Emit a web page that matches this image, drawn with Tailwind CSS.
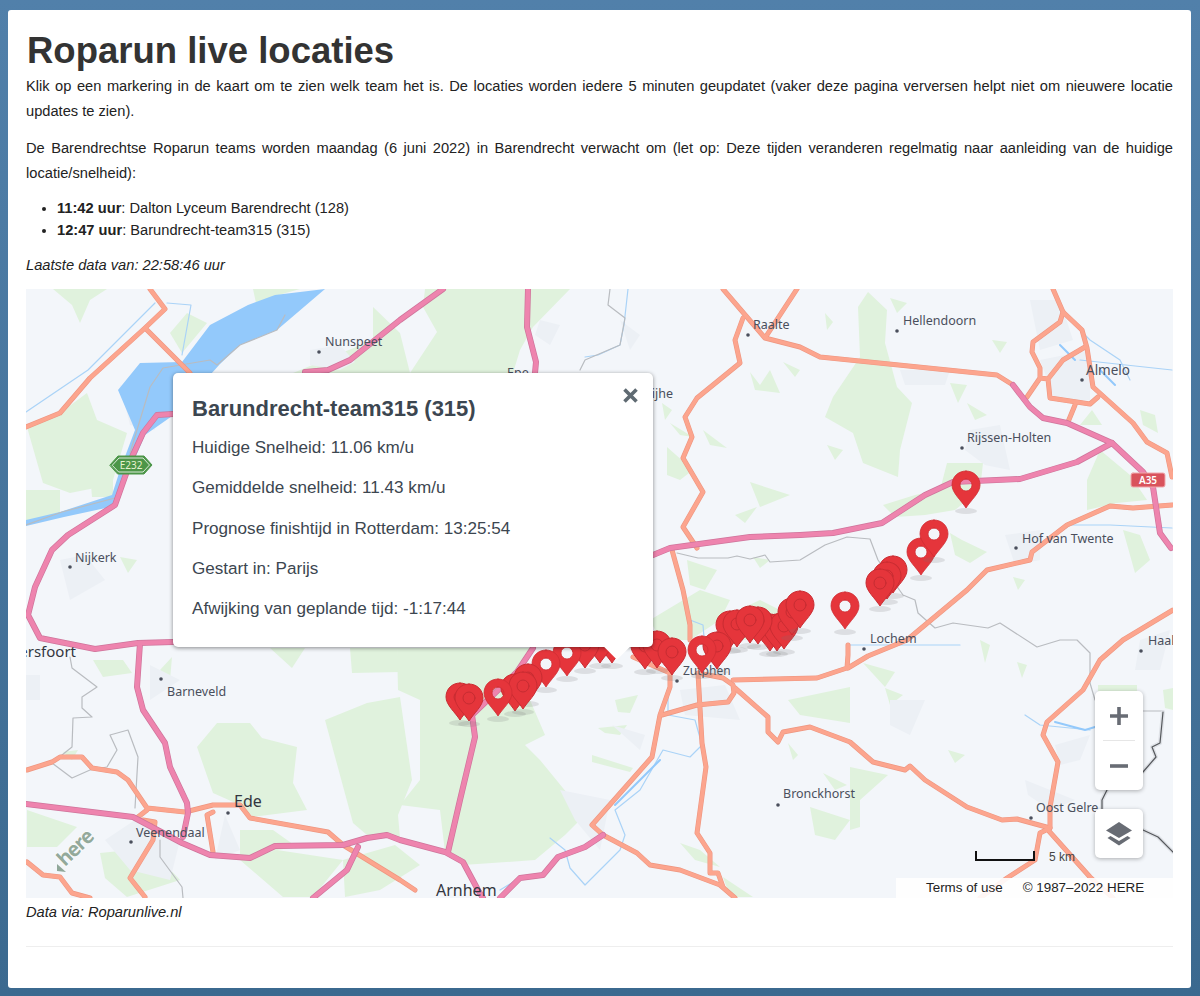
<!DOCTYPE html>
<html lang="en">
<head>
  <meta charset="UTF-8">
  <title>Roparun live locaties</title>
  <script src="https://cdn.jsdelivr.net/npm/@tailwindcss/browser@4"></script>
</head>
<body class="h-[996px] overflow-hidden bg-gradient-to-b from-[#5180aa] to-[#3b698f] font-['Liberation_Sans',Arial,sans-serif]">
  <!-- Page card -->
  <main class="ml-[8px] mt-[10px] h-[978px] w-[1183px] rounded-[3px] bg-white pl-[18px] pr-[18px] pt-[21px] text-[14.67px] leading-[25px] text-[#222]">
    <h1 class="mb-[3px] pl-[1px] text-[36.5px] font-bold leading-[40px] text-[#333]">Roparun live locaties</h1>
    <p class="mb-[12px] text-justify">Klik op een markering in de kaart om te zien welk team het is. De locaties worden iedere 5 minuten geupdatet (vaker deze pagina verversen helpt niet om nieuwere locatie updates te zien).</p>
    <p class="mb-[11px] text-justify">De Barendrechtse Roparun teams worden maandag (6 juni 2022) in Barendrecht verwacht om (let op: Deze tijden veranderen regelmatig naar aanleiding van de huidige locatie/snelheid):</p>
    <ul class="mb-[12px] list-disc pl-[31px] leading-[22px]">
      <li><b>11:42 uur</b>: Dalton Lyceum Barendrecht (128)</li>
      <li><b>12:47 uur</b>: Barundrecht-team315 (315)</li>
    </ul>
    <p class="mb-[11px] italic">Laatste data van: 22:58:46 uur</p>

    <!-- Map -->
    <div class="relative h-[609px] w-[1147px] overflow-hidden bg-[#f3f6fa]">
      <svg class="block" width="1147" height="609" viewBox="26 289 1147 609" fill="none" stroke-linejoin="round" stroke-linecap="round">
        <defs>
          <path id="pinshape" d="M0 -14C8 -14 14 -8 14 0C14 8 5 15 0 23C-5 15 -14 8 -14 0C-14 -8 -8 -14 0 -14Z"/>
          <!-- pin with a see-through hole -->
          <g id="pin">
            <ellipse cx="0" cy="26" rx="11" ry="3" fill="#777" opacity=".18"/>
            <path fill-rule="evenodd" fill="#e5353b" stroke="#cf2d33" stroke-width=".8" d="M0 -14C8 -14 14 -8 14 0C14 8 5 15 0 23C-5 15 -14 8 -14 0C-14 -8 -8 -14 0 -14ZM0 -6A6 6 0 1 0 0 6A6 6 0 1 0 0 -6Z"/>
          </g>
          <!-- pin sitting on another pin: hole shows red -->
          <g id="pinf">
            <ellipse cx="0" cy="26" rx="11" ry="3" fill="#777" opacity=".18"/>
            <use href="#pinshape" fill="#e5353b" stroke="#c92c32" stroke-width="1"/>
            <circle cx="0" cy="0" r="6" stroke="#c62c32" stroke-width="1"/>
          </g>
          <g id="orange">
            <path d="M26 427L60 413L90 378L145 328L165 309L150 289M145 328L190 373"/>
            <path d="M723 289L765 338L800 347L820 357L997 375L1013 385M765 338L797 289"/>
            <path d="M743 318L735 340L740 363L697 398L685 417L692 437L683 458L703 492L683 527L697 548"/>
            <path d="M672 550L683 590L690 625L690 640"/>
            <path d="M592 825L652 757L660 715L670 687L670 673L633 657M592 825L603 835L637 853L650 865L680 870L720 885L735 898"/>
            <path d="M662 715L697 705L728 702L734 693L733 685L723 678L698 673L702 743L706 767L697 833L710 853L710 873L718 873L723 887"/>
            <path d="M733 680L817 678L847 668L848 655L848 645M735 688L768 717L768 732L778 742L783 732L810 727L850 742L873 762L905 770L910 766L925 780L967 807L1002 820L1017 819L1050 828"/>
            <path d="M848 668L868 656L907 640L967 590L987 570L1030 560L1032 552L1067 525L1110 506L1133 508L1172 505"/>
            <path d="M1173 610L1123 640L1100 660L1083 690L1047 722L1043 735L1058 762L1050 807L1050 828L1040 833L1035 860L1007 878L980 898M1048 830L1090 877L1113 898"/>
            <path d="M1053 289L1063 312L1082 330L1087 348L1093 387L1133 423L1147 442L1167 453L1172 477"/>
            <path d="M1063 312L1060 322L1033 342L1032 352L1040 368L1040 378L1027 397M1040 378L1048 379L1063 360L1085 347M1048 379L1050 398L1090 404L1098 397M1075 405L1068 422"/>
            <path d="M27 770L52 762L60 757L82 757L92 768L117 772L128 780L147 808L185 812L213 805L240 805L250 818L328 832L343 845L400 880L415 890M147 810L138 817M143 820L155 822L153 840L130 878L145 897M213 812L207 815L213 852M27 862L43 875L60 877L72 893L90 898"/>
          </g>
          <g id="pink">
            <path d="M653 555L670 548L750 537L800 535L833 533L882 523L925 495L953 482L1020 479L1077 462L1112 443"/>
            <path d="M1013 385L1030 407L1043 418L1067 423L1112 443L1143 472L1153 487L1160 533L1171 548"/>
            <path d="M443 289L400 320L350 360L328 370L305 372M528 289L527 327L536 362L535 373"/>
            <path d="M173 414L157 415L143 433L132 457L115 505L68 535L52 550L35 587L28 615L40 638L95 649L138 643L173 642"/>
            <path d="M140 643L137 687L143 710L165 743L170 767L187 803L188 813L183 837"/>
            <path d="M26 804L133 817L182 843L210 855L250 858L275 846L343 845L367 838L387 835L400 840L445 852L463 862L478 890L483 898"/>
            <path d="M358 847L347 870L313 898M448 852L460 800L475 737L472 715L517 672L533 648"/>
            <path d="M500 898L520 878L543 875L558 857L585 847L603 835"/>
          </g>
        </defs>

        <!-- Land cover -->
        <g fill="#e0f2dd">
          <path d="M27 427L60 413L87 393L97 420L127 433L113 480L95 488L70 493L43 483Z"/>
          <path d="M170 333L187 313L207 323L182 353ZM53 289L107 289L90 300L80 323L72 305ZM253 289L300 289L275 296L256 303ZM26 490L60 490L60 515L26 522ZM90 473L113 480L113 497L92 497ZM120 557L137 560L128 573Z"/>
          <path d="M425 289L570 289L533 327L520 350L513 373L410 373L437 332L423 307Z"/>
          <path d="M293 373L373 340L373 307L400 333L410 373Z"/>
          <path d="M270 648L305 648L292 668ZM350 648L397 648L400 672L352 673Z"/>
          <path d="M397 648L533 648L510 680L530 700L545 735L525 745L540 760L585 815L565 835L535 860L463 865L445 852L440 810L400 805L420 780L420 700L398 690Z"/>
          <path d="M325 720L367 703L400 697L412 780L398 815L400 838L367 835L353 823Z"/>
          <path d="M197 747L217 723L250 723L262 738L297 747L293 783L307 810L253 817L240 805L213 793Z"/>
          <path d="M240 830L273 830L297 847L277 850L240 858ZM283 897L240 860L277 850L343 860L313 897ZM343 860L395 845L420 865L380 890L345 897Z"/>
          <path d="M27 810L77 827L57 847L27 847ZM100 853L150 848L180 880L127 897L105 878ZM93 660L123 660L132 673L103 677ZM160 670L172 657L170 680ZM63 752L78 750L72 760Z"/>
          <path d="M615 700L638 695L630 713L618 712ZM598 728L627 725L620 735L605 733ZM592 755L633 768L630 772L592 762Z"/>
          <path d="M650 620L700 590L730 600L720 620L690 640L660 640Z"/>
          <path d="M728 615L760 600L790 615L780 640L735 640Z"/>
          <path d="M858 307L868 292L887 310L885 343L897 387L912 403L900 450L898 477L863 463L853 433L825 417L833 397L860 357Z"/>
          <path d="M1100 450L1130 475L1147 500L1117 503L1087 510L1087 480Z"/>
          <path d="M947 463L983 463L980 490L955 510L925 515L895 517L883 505L915 495L940 490Z"/>
          <path d="M950 533L962 540L987 552L970 563L955 555ZM1123 530L1140 535L1150 560L1135 573ZM1013 577L1025 580L1018 590ZM827 445L843 450L835 460Z"/>
          <path d="M950 383L967 385L958 403ZM967 403L987 415L975 420ZM992 340L1007 342L1000 353ZM825 313L833 322L827 330ZM890 298L907 303L897 313ZM1140 410L1155 415L1158 433L1143 425ZM1080 425L1092 410L1102 425Z"/>
          <path d="M750 372L760 385L770 370L780 393L755 390ZM783 362L800 370L795 377ZM662 403L672 410L665 420ZM670 423L693 437L680 435ZM667 447L693 470L680 480L667 475ZM703 430L727 448L710 445ZM750 482L790 495L760 507ZM735 515L757 507L745 523ZM687 560L717 570L705 590L690 585ZM753 557L770 560L760 568Z"/>
          <path d="M863 663L895 672L885 687ZM885 688L903 695L890 705ZM980 640L990 645L985 663ZM1017 662L1027 665L1022 678ZM948 750L965 755L955 763ZM1098 685L1137 685L1137 692L1098 692ZM1163 690L1173 688L1173 710L1165 708ZM850 767L888 775L860 800L860 827L850 830Z"/>
          <path d="M788 700L850 687L850 723L800 715ZM680 843L700 850L720 867L695 860ZM723 877L753 897L730 897ZM788 743L798 755L793 760ZM810 807L850 820L835 840L815 835ZM823 773L847 785L835 790Z"/>
        </g>
        <!-- Urban areas -->
        <g fill="#ecf0f5">
          <path d="M310 350L340 345L355 362L340 370L310 365ZM540 320L560 325L550 345L535 335ZM620 320L640 335L630 350ZM1030 300L1060 300L1073 340L1040 350ZM1040 360L1090 350L1090 400L1055 400ZM970 430L1000 425L1010 470L985 465L965 450ZM900 370L950 370L945 385L905 385Z"/>
          <path d="M1005 535L1040 530L1040 560L1015 565ZM120 385L145 395L155 430L130 425ZM60 560L85 555L105 580L70 600ZM150 665L180 680L150 700ZM26 675L40 675L40 700L26 700ZM135 820L180 840L170 880L130 870L105 840Z"/>
          <path d="M225 815L240 850L215 860ZM612 725L645 735L640 750ZM560 790L610 800L600 850L575 820ZM680 690L725 685L740 720L685 715ZM1140 640L1170 630L1160 670L1135 670ZM1055 745L1090 735L1080 760L1060 765ZM890 700L925 700L910 735L890 725ZM1025 780L1075 800L1050 810L1028 795Z"/>
        </g>

        <!-- Water -->
        <path fill="#93c9fb" d="M325 289L275 295L248 305L210 325L182 362L140 363L118 390L135 430L120 470L112 495L60 512L26 520L26 526L64 517L115 506L130 470L145 435L175 414L220 364L240 345L277 330Z"/>
        <g stroke="#aad3f7" stroke-width="1.200">
          <path d="M26 412L88 370L155 303M167 303L191 305L182 355M628 289L624 325L620 345L598 355L585 357M690 620L703 625L705 650M850 645L960 645M668 695L668 715L695 720L702 745L690 757L663 750L640 790L615 810L625 835L620 850L595 875L585 885L570 868L565 850L550 838M520 878L500 890"/>
          <path d="M1032 552L1070 525L1110 525L1172 528M1060 310L1090 340L1120 360L1130 380M1080 360L1172 370"/>
          <path d="M1025 715L1040 725L1090 730"/>
        </g>
        <path stroke="#93c9fb" stroke-width="2" d="M615 805L650 770L660 760M1055 722L1085 730L1095 727M1060 345L1075 360M1100 370L1115 385"/>

        <!-- Borders -->
        <g stroke="#b9bcc0" stroke-width="1.200">
          <path d="M70 657L72 668L97 687L82 697L82 708L92 717L73 718L72 747L52 763L72 778L90 770L107 767L117 750L110 735L128 730L138 757L135 808M160 840L160 857L182 887L183 898"/>
          <path d="M130 453L150 387L163 368L210 360L217 365L240 345L277 330L285 315"/>
          <path d="M677 553L698 558L728 558L737 556L750 559L765 555L770 562L800 560L825 545L847 537L870 539L878 560L903 595L915 600L918 613L935 628L953 623L988 628L1000 623L1037 647L1060 640L1077 640L1090 653L1090 683L1095 700M1143 711L1163 711"/>
          <path d="M26 525L62 512L115 498M610 289L608 305L625 318L620 345L585 360L580 370"/>
        </g>
        <path stroke="#dfe2e7" stroke-width="4" d="M1163 712L1160 743L1152 747L1156 757L1143 772M1107 790L1102 800L1102 810M1143 830L1158 837L1173 852"/>
        <path stroke="#55585c" stroke-width="1.200" d="M1163 712L1160 743L1152 747L1156 757L1143 772M1107 790L1102 800L1102 810M1143 830L1158 837L1173 852"/>

        <!-- Roads -->
        <use href="#orange" stroke="#ee9680" stroke-width="5"/>
        <use href="#orange" stroke="#fca58e" stroke-width="3.800"/>
        <use href="#pink" stroke="#cf749b" stroke-width="6"/>
        <use href="#pink" stroke="#ee84ae" stroke-width="4.600"/>

        <!-- Shields -->
        <g font-family="'Noto Sans',sans-serif" font-size="10" text-anchor="middle">
          <path d="M110 465L118 456L144 456L152 465L144 474L118 474Z" fill="#4c9648" stroke="#4c9648"/>
          <path d="M112.500 465L119 458L143 458L149.500 465L143 472L119 472Z" stroke="#fff" stroke-width=".8"/>
          <text x="131" y="469" fill="#e6f2cf">E232</text>
          <rect x="1131" y="473" width="34" height="14" rx="2" fill="#d9535c" stroke="#f0a9ad" stroke-width="1"/>
          <text x="1148" y="484" fill="#fff" font-weight="600">A35</text>
        </g>

        <!-- Place labels -->
        <g fill="#4a4f5c">
          <circle cx="319" cy="352" r="1.800"/><circle cx="70" cy="567" r="1.800"/><circle cx="161" cy="679" r="1.800"/>
          <circle cx="748" cy="335" r="1.800"/><circle cx="897" cy="331" r="1.800"/><circle cx="1082" cy="380" r="1.800"/>
          <circle cx="962" cy="448" r="1.800"/><circle cx="1016" cy="548" r="1.800"/><circle cx="864" cy="649" r="1.800"/>
          <circle cx="1141" cy="651" r="1.800"/><circle cx="677" cy="681" r="1.800"/><circle cx="778" cy="805" r="1.800"/>
          <circle cx="1031" cy="818" r="1.800"/><circle cx="228" cy="813" r="1.800"/><circle cx="131" cy="842" r="1.800"/>
        </g>
        <g font-family="'Noto Sans',sans-serif" fill="#4a4f5c" font-size="12.500">
          <text x="325" y="346">Nunspeet</text>
          <text x="753" y="329">Raalte</text>
          <text x="903" y="325">Hellendoorn</text>
          <text x="1086" y="375" font-size="13.500">Almelo</text>
          <text x="967" y="442">Rijssen-Holten</text>
          <text x="1022" y="543">Hof van Twente</text>
          <text x="75" y="562">Nijkerk</text>
          <text x="167" y="696">Barneveld</text>
          <text x="136" y="837">Veenendaal</text>
          <text x="683" y="675" font-size="12">Zutphen</text>
          <text x="870" y="643">Lochem</text>
          <text x="783" y="798">Bronckhorst</text>
          <text x="1036" y="812">Oost Gelre</text>
          <text x="1148" y="645">Haaksbergen</text>
          <text x="507" y="377">Epe</text>
          <text x="673" y="398" text-anchor="end">Wijhe</text>
          <text x="76" y="657" font-size="15" text-anchor="end" fill="#33363f">Amersfoort</text>
          <text x="234" y="807" font-size="16" fill="#33363f">Ede</text>
          <text x="436" y="896" font-size="16" fill="#33363f">Arnhem</text>
        </g>

        <!-- here logo -->
        <path d="M57 864L66 872L57 871Z" fill="#8fa799"/>
        <text x="65" y="867" transform="rotate(-44 65 867)" font-family="'Noto Sans',sans-serif" font-size="20" font-weight="700" letter-spacing="-1" fill="#93a99b" stroke="#fff" stroke-width="1" paint-order="stroke">here</text>

        <!-- Markers -->
        <use href="#pin" x="966" y="485"/>
        <use href="#pin" x="921" y="552"/>
        <use href="#pin" x="934" y="534"/>
        <use href="#pinf" x="893" y="570"/>
        <use href="#pinf" x="887" y="576"/>
        <use href="#pinf" x="880" y="583"/>
        <use href="#pin" x="845" y="606"/>
        <use href="#pinf" x="770" y="628"/>
        <use href="#pinf" x="777" y="628"/>
        <use href="#pinf" x="784" y="626"/>
        <use href="#pinf" x="792" y="612"/>
        <use href="#pinf" x="800" y="605"/>
        <use href="#pinf" x="730" y="625"/>
        <use href="#pinf" x="737" y="624"/>
        <use href="#pinf" x="758" y="621"/>
        <use href="#pinf" x="750" y="620"/>
        <use href="#pinf" x="717" y="646"/>
        <use href="#pin" x="702" y="650"/>
        <use href="#pinf" x="645" y="646"/>
        <use href="#pinf" x="657" y="645"/>
        <use href="#pinf" x="672" y="652"/>
        <use href="#pinf" x="612" y="640"/>
        <use href="#pinf" x="600" y="640"/>
        <use href="#pinf" x="585" y="645"/>
        <use href="#pin" x="567" y="653"/>
        <use href="#pin" x="546" y="664"/>
        <use href="#pinf" x="528" y="678"/>
        <use href="#pinf" x="515" y="688"/>
        <use href="#pinf" x="523" y="686"/>
        <use href="#pin" x="498" y="693"/>
        <use href="#pinf" x="460" y="697"/>
        <use href="#pinf" x="469" y="698"/>
      </svg>

      <!-- Info popup -->
      <div class="absolute left-[147px] top-[84px] h-[274px] w-[480px] rounded-[5px] bg-white pl-[19px] pt-[24px] text-[#3c4650] shadow-[0_1px_4px_rgba(0,0,0,0.45)]">
        <h2 class="mb-[17px] text-[22px] font-bold leading-[24px]">Barundrecht-team315 (315)</h2>
        <div class="flex flex-col gap-[20.25px] text-[17.1px] leading-[20px]">
          <p>Huidige Snelheid: 11.06 km/u</p>
          <p>Gemiddelde snelheid: 11.43 km/u</p>
          <p>Prognose finishtijd in Rotterdam: 13:25:54</p>
          <p>Gestart in: Parijs</p>
          <p>Afwijking van geplande tijd: -1:17:44</p>
        </div>
        <svg class="absolute right-[15px] top-[15px]" width="15" height="15" viewBox="0 0 15 15"><path d="M1.500 1.500L13.500 13.500M13.500 1.500L1.500 13.500" stroke="#5f6a72" stroke-width="3.600"/></svg>
        <div class="absolute bottom-[-9px] left-[435px] h-[18px] w-[18px] rotate-45 bg-white"></div>
      </div>

      <!-- Map controls -->
      <div class="absolute left-[1069px] top-[402px] flex h-[99px] w-[48px] flex-col items-center rounded-[5px] bg-white shadow-[0_1px_4px_rgba(0,0,0,0.3)]">
        <div class="flex h-[49px] items-center justify-center">
          <svg width="18" height="18" viewBox="0 0 18 18"><path d="M9 0V18M0 9H18" stroke="#686c74" stroke-width="3.600"/></svg>
        </div>
        <div class="h-px w-[32px] bg-[#e6e6e6]"></div>
        <div class="flex h-[49px] items-center justify-center">
          <svg width="18" height="4" viewBox="0 0 18 4"><path d="M0 2H18" stroke="#686c74" stroke-width="3.600"/></svg>
        </div>
      </div>
      <div class="absolute left-[1069px] top-[520px] flex h-[49px] w-[48px] items-center justify-center rounded-[5px] bg-white shadow-[0_1px_4px_rgba(0,0,0,0.3)]">
        <svg width="26" height="26" viewBox="0 0 26 26"><path d="M13 1L26 9.500L13 17L0 9.500Z" fill="#686c74"/><path d="M4.500 15L1.500 17L13 24.500L24.500 17L21.500 15L13 20Z" fill="#686c74"/></svg>
      </div>

      <!-- Scale -->
      <div class="absolute left-[949px] top-[562px] h-[10px] w-[60px] border-x-[2px] border-b-[2px] border-[#111]"></div>
      <span class="absolute left-[1023px] top-[560px] text-[12px] leading-[16px] text-[#444]">5 km</span>

      <!-- Attribution -->
      <div class="absolute bottom-0 right-0 flex h-[20px] w-[277px] items-center gap-[20px] bg-white/90 pl-[30px] text-[13.4px] leading-[20px] text-[#222]">
        <span>Terms of use</span>
        <span>© 1987–2022 HERE</span>
      </div>
    </div>

    <p class="mt-[2px] italic">Data via: Roparunlive.nl</p>
    <hr class="mt-[21px] border-[#eee]">
  </main>
</body>
</html>
